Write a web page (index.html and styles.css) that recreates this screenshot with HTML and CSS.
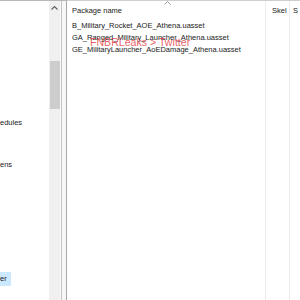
FILE: index.html
```html
<!DOCTYPE html>
<html>
<head>
<meta charset="utf-8">
<link rel="stylesheet" href="styles.css">
</head>
<body>
<div class="app">
  <div class="left">
    <div class="tree">
      <div class="item i1">edules</div>
      <div class="item i2">ens</div>
      <div class="item sel">er</div>
    </div>
    <div class="scroll">
      <svg class="arrow" width="7" height="4" viewBox="0 0 7 4"><path d="M0.5 3.5 L3.5 0.5 L6.5 3.5" fill="none" stroke="#606060" stroke-width="1.1"/></svg>
      <div class="thumb"></div>
    </div>
  </div>
  <div class="split"><div class="gap"></div><div class="mid"></div></div>
  <div class="right">
    <div class="col name">
      <div class="hdr">Package name
        <svg class="sort" width="7" height="4" viewBox="0 0 7 4"><path d="M0.5 3.5 L3.5 0.5 L6.5 3.5" fill="none" stroke="#9a9a9a" stroke-width="1"/></svg>
      </div>
      <div class="row">B_Military_Rocket_AOE_Athena.uasset</div>
      <div class="row">GA_Ranged_Military_Launcher_Athena.uasset</div>
      <div class="row">GE_MilitaryLauncher_AoEDamage_Athena.uasset</div>
      <div class="mark">FNBRLeaks &gt; Twitter</div>
    </div>
    <div class="col skel"><div class="hdr">Skel</div></div>
    <div class="col last"><div class="hdr">S</div></div>
  </div>
</div>
</body>
</html>
```
FILE: styles.css
```css
html, body { margin: 0; padding: 0; }
body {
  width: 300px; height: 300px; overflow: hidden; background: #fff;
  font-family: "Liberation Sans", Arial, sans-serif; font-size: 7.5px; color: #1a1a1a;
}
.app { display: flex; height: 300px; border-top: 1px solid #cfcfcf; box-sizing: border-box; }
.left { display: flex; width: 60px; border-top: 1px solid #b8b8b8; margin-top: -1px; }
.tree { width: 49px; position: relative; }
.item { line-height: 10px; white-space: nowrap; }
.i1 { margin-top: 117px; }
.i2 { margin-top: 32px; }
.sel { margin-top: 102px; width: 11px; height: 14px; line-height: 14px; background: #cce8ff; }
.scroll { width: 11px; background: #f0f0f0; display: flex; flex-direction: column; align-items: center; }
.arrow { margin-top: 5px; }
.thumb { width: 10px; height: 48px; margin-top: 51px; background: #cdcdcd; }
.split { display: flex; width: 7px; border-top: 1px solid #b8b8b8; margin-top: -1px; }
.gap { width: 1px; background: #fafafa; border-right: 1px solid #c4c4c4; }
.mid { flex: 1; background: #f7f7f7; border-right: 1px solid #a8a8a8; }
.right { flex: 1; display: flex; }
.col { position: relative; }
.name { width: 193px; padding-left: 5px; border-right: 1px solid #ebebeb; }
.skel { width: 24px; border-right: 1px solid #ebebeb; padding-left: 6px; box-sizing: border-box; }
.last { flex: 1; padding-left: 3px; }
.hdr { height: 19px; line-height: 20px; color: #222; white-space: nowrap; }
.sort { position: absolute; left: 97px; top: 0px; }
.row { line-height: 12px; white-space: nowrap; }
.mark {
  position: absolute; left: 23px; top: 35px; font-size: 10.6px; line-height: 12px;
  color: rgba(226, 40, 48, 0.75); white-space: nowrap;
}
```
